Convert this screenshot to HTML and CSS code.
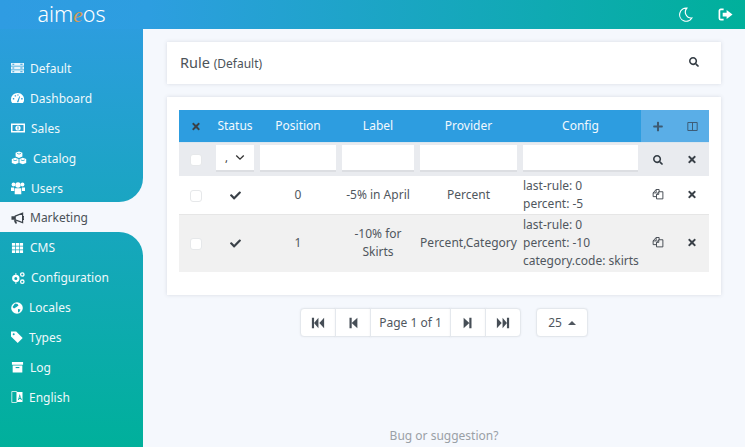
FILE: index.html
```html
<!DOCTYPE html>
<html lang="en">
<head>
<meta charset="utf-8">
<title>Rule</title>
<link rel="stylesheet" href="styles.css">
</head>
<body>
<svg class="defs" width="0" height="0" aria-hidden="true">
  <symbol id="i-check" viewBox="0 0 512 512"><path d="M173.898 439.404l-166.4-166.4c-9.997-9.997-9.997-26.206 0-36.204l36.203-36.204c9.997-9.998 26.207-9.998 36.204 0L192 312.69 432.095 72.596c9.997-9.997 26.207-9.997 36.204 0l36.203 36.204c9.997 9.997 9.997 26.206 0 36.204l-294.4 294.401c-9.998 9.997-26.207 9.997-36.204-.001z"/></symbol>
  <symbol id="i-times" viewBox="0 0 352 512"><path d="M242.72 256l100.07-100.07c12.28-12.28 12.28-32.19 0-44.48l-22.24-22.24c-12.28-12.28-32.19-12.28-44.48 0L176 189.28 75.93 89.21c-12.28-12.28-32.19-12.28-44.48 0L9.21 111.45c-12.28 12.28-12.28 32.19 0 44.48L109.28 256 9.21 356.07c-12.28 12.28-12.28 32.19 0 44.48l22.24 22.24c12.28 12.28 32.2 12.28 44.48 0L176 322.72l100.07 100.07c12.28 12.28 32.2 12.28 44.48 0l22.24-22.24c12.28-12.28 12.28-32.19 0-44.48L242.72 256z"/></symbol>
  <symbol id="i-plus" viewBox="0 0 448 512"><path d="M416 208H272V64c0-17.67-14.33-32-32-32h-32c-17.67 0-32 14.33-32 32v144H32c-17.67 0-32 14.33-32 32v32c0 17.67 14.33 32 32 32h144v144c0 17.67 14.33 32 32 32h32c17.67 0 32-14.33 32-32V304h144c17.67 0 32-14.33 32-32v-32c0-17.67-14.33-32-32-32z"/></symbol>
  <symbol id="i-search" viewBox="0 0 512 512"><path d="M505 442.7L405.3 343c-4.5-4.5-10.6-7-17-7H372c27.6-35.3 44-79.7 44-128C416 93.1 322.9 0 208 0S0 93.1 0 208s93.1 208 208 208c48.3 0 92.7-16.4 128-44v16.3c0 6.4 2.5 12.5 7 17l99.7 99.7c9.4 9.4 24.6 9.4 33.9 0l28.3-28.3c9.4-9.4 9.4-24.6.1-34zM208 336c-70.7 0-128-57.2-128-128 0-70.7 57.2-128 128-128 70.7 0 128 57.2 128 128 0 70.7-57.2 128-128 128z"/></symbol>
  <symbol id="i-columns" viewBox="0 0 16 16"><path fill="none" stroke="currentColor" stroke-width="1.400" d="M1.200 2.200h13.600v11.600H1.200zM8 2.200v11.600"/></symbol>
  <symbol id="i-copy" viewBox="0 0 16 16"><path fill="none" stroke="currentColor" stroke-width="1.200" stroke-linejoin="round" d="M5.500 11.500H1.500V6.500L5.500 2H9.500V5M5.500 2V6.500H1.500M9 5H14.500V14.500H6V8.500zM9 5V8.500H6"/></symbol>
  <symbol id="i-first" viewBox="0 0 16 16"><path d="M1 2h2.500v12H1zM8.500 2v12L3.500 8zM15 2v12L9.500 8z"/></symbol>
  <symbol id="i-prev" viewBox="0 0 12 16"><path d="M2 2h2.500v12H2zM11 2v12L4.500 8z"/></symbol>
  <symbol id="i-next" viewBox="0 0 12 16"><path d="M1 2v12l6.500-6zM7.500 2H10v12H7.500z"/></symbol>
  <symbol id="i-last" viewBox="0 0 16 16"><path d="M1 2v12l5.500-6zM7.500 2v12l5-6zM12.500 2H15v12h-2.500z"/></symbol>
</svg>

<header class="topbar">
  <div class="logo">aim<em>e</em>os</div>
  <div class="top-actions">
    <svg class="top-icon" viewBox="0 0 16 16"><path fill="none" stroke="#fff" stroke-width="1.200" d="M9.500 1.200A7 7 0 1 0 14.800 11.700 6.300 6.300 0 0 1 9.500 1.200z"/></svg>
    <svg class="top-icon" viewBox="0 0 16 16"><path fill="#fff" d="M9.200 3.300L15.500 8l-6.300 4.700V10H5V6h4.200z"/><path fill="none" stroke="#fff" stroke-width="1.800" d="M6 2.500H3A1.500 1.500 0 0 0 1.500 4v8A1.500 1.500 0 0 0 3 13.500h3"/></svg>
  </div>
</header>

<div class="layout">
  <nav class="sidebar">
    <div class="nav-group nav-top">
      <a class="nav-item"><svg class="nav-icon w1" viewBox="0 0 14 14"><path fill="#e8f5fb" d="M0 1.500h14v3H0zM0 5.500h14v3H0zM0 9.500h14v3H0z"/><path fill="#2c9cdc" d="M1.500 2.500h2v1h-2zM1.500 6.500h2v1h-2zM1.500 10.500h2v1h-2zM10 2.500h2.500v1H10zM10 6.500h2.500v1H10zM10 10.500h2.500v1H10z"/></svg>Default</a>
      <a class="nav-item"><svg class="nav-icon w1" viewBox="0 0 14 14"><path fill="#fff" d="M7 1.500a7 7 0 0 0-7 7c0 1.500.4 2.800 1.200 4h11.600A7 7 0 0 0 7 1.500z"/><path fill="#2a9ed8" d="M6.300 11.500L9 5l.8.300L8 11.500zM2 7h1.500v1.500H2zM4 4h1.500v1.500H4zM7 3h1v1.500H7zM11 7h1.500v1.500H11z"/></svg>Dashboard</a>
      <a class="nav-item"><svg class="nav-icon w2" viewBox="0 0 14 14"><path fill="#fff" d="M0 2.500h14v9H0z"/><path fill="#26a0cf" d="M1.500 4h11v6h-11z"/><circle fill="#fff" cx="7" cy="7" r="2.600"/><path fill="#26a0cf" d="M6.500 5.500h1v3h-1z"/></svg>Sales</a>
      <a class="nav-item"><svg class="nav-icon w3" viewBox="0 0 16 14"><path fill="#fff" d="M8 .5l3.400 1.300v3.800L8 7 4.600 5.600V1.800zM4.200 6.700l3.300 1.300v3.900L4.200 13.300.8 11.900V8zM11.800 6.700L15.200 8v3.900l-3.400 1.400-3.300-1.400V8z"/><path fill="#1fa5c8" d="M6 2l2 .8L10 2v.8l-2 .8-2-.8zM2.200 8.500l2 .8 2-.8v.8l-2 .8-2-.8zM9.800 8.500l2 .8 2-.8v.8l-2 .8-2-.8z"/></svg>Catalog</a>
      <a class="nav-item"><svg class="nav-icon w2" viewBox="0 0 14 14"><circle fill="#fff" cx="2.500" cy="3.500" r="1.900"/><circle fill="#fff" cx="11.500" cy="3.500" r="1.900"/><circle fill="#fff" cx="7" cy="4" r="2.700"/><path fill="#fff" d="M0 6.500h3l.3 3.500H0zM11 6.500h3V10h-3zM3.700 7.300h6.600v6H3.700z"/></svg>Users</a>
    </div>
    <a class="nav-item nav-active"><svg class="nav-icon w1" viewBox="0 0 14 14"><path fill="#3b434a" d="M.5 5H4.500V9H.5zM3 9.500h2.500l1 3.500h-2z"/><path fill="none" stroke="#3b434a" stroke-width="1.300" d="M4.500 5L12.500 1.800V12L4.500 9zM12.500 5.500H14V8.500H12.500"/></svg>Marketing</a>
    <div class="nav-group nav-bottom">
      <a class="nav-item"><svg class="nav-icon w1" viewBox="0 0 14 14"><path fill="#fff" d="M1 1.500h3.500v3H1zM5.300 1.500h3.500v3H5.300zM9.500 1.500H13v3H9.500zM1 5.500h3.500v3H1zM5.300 5.500h3.500v3H5.300zM9.500 5.500H13v3H9.500zM1 9.500h3.500v3H1zM5.300 9.500h3.500v3H5.300zM9.500 9.500H13v3H9.500z"/></svg>CMS</a>
      <a class="nav-item"><svg class="nav-icon w2" viewBox="0 0 14 14"><circle fill="none" stroke="#fff" stroke-width="2.200" cx="4.800" cy="7.500" r="2.600"/><path fill="none" stroke="#fff" stroke-width="1.600" stroke-dasharray="1.500 1.500" d="M4.800 3.400v-1M4.800 12.600v-1"/><circle fill="none" stroke="#fff" stroke-width="1.300" cx="11.300" cy="3.500" r="1.700"/><circle fill="none" stroke="#fff" stroke-width="1.300" cx="11.300" cy="10.700" r="1.700"/></svg>Configuration</a>
      <a class="nav-item"><svg class="nav-icon w4" viewBox="0 0 12 14"><circle fill="#fff" cx="6" cy="7" r="5.800"/><path fill="#0ea9b5" d="M4 2.500l2.500.5 1 1.500-2 1.500L3 7.500 1.500 6zM7 8l2.500.5L8 11.500 7 11z"/></svg>Locales</a>
      <a class="nav-item"><svg class="nav-icon w4" viewBox="0 0 12 14"><path fill="#fff" d="M0 1.500h5.200l6.500 6.500-5 5L0 6.500z"/><circle fill="#0ea9b5" cx="2.700" cy="4.200" r="1"/></svg>Types</a>
      <a class="nav-item"><svg class="nav-icon w1" viewBox="0 0 14 14"><path fill="#fff" d="M1 1.500h12v3H1zM1.800 5.500h10.400v7.500H1.800z"/><path fill="#0bacae" d="M5 7h4v1.200H5z"/></svg>Log</a>
      <a class="nav-item"><svg class="nav-icon w4" viewBox="0 0 12 14"><path fill="none" stroke="#bfeae6" stroke-width="1" d="M.8 1.500h5v11h-5z"/><path fill="#fff" d="M6 2h5.500v10H6z"/><path fill="#05aea8" d="M8.700 4L7 10h1l.3-1h1.300l.3 1h1zM8.500 8l.5-2 .4 2z"/></svg>English</a>
    </div>
  </nav>

  <main class="main">
    <section class="card title-card">
      <h1 class="title">Rule <small>(Default)</small></h1>
      <svg class="ic ic-search-top"><use href="#i-search"/></svg>
    </section>

    <section class="card table-card">
      <table class="list">
        <colgroup>
          <col class="c-check"><col class="c-status"><col class="c-pos"><col class="c-label"><col class="c-prov"><col class="c-conf"><col class="c-act"><col class="c-act">
        </colgroup>
        <thead>
          <tr class="head">
            <th><svg class="ic ic-x"><use href="#i-times"/></svg></th>
            <th>Status</th><th>Position</th><th>Label</th><th>Provider</th><th>Config</th>
            <th class="head-act"><svg class="ic ic-plus"><use href="#i-plus"/></svg></th>
            <th class="head-act"><svg class="ic ic-cols"><use href="#i-columns"/></svg></th>
          </tr>
          <tr class="filter">
            <td class="fill"><span class="box"></span></td>
            <td><div class="field select"><span class="sel-val">,</span><svg class="chev" viewBox="0 0 12 8"><path fill="none" stroke="#333" stroke-width="1.600" d="M1.500 1.500L6 6l4.500-4.500"/></svg></div></td>
            <td><div class="field"></div></td>
            <td><div class="field"></div></td>
            <td><div class="field"></div></td>
            <td><div class="field"></div></td>
            <td class="fill"><svg class="ic ic-search"><use href="#i-search"/></svg></td>
            <td class="fill"><svg class="ic ic-x"><use href="#i-times"/></svg></td>
          </tr>
        </thead>
        <tbody>
          <tr class="row">
            <td><span class="box"></span></td>
            <td><svg class="ic ic-check"><use href="#i-check"/></svg></td>
            <td>0</td><td>-5% in April</td><td>Percent</td>
            <td class="conf">last-rule: 0<br>percent: -5</td>
            <td><svg class="ic ic-copy"><use href="#i-copy"/></svg></td>
            <td><svg class="ic ic-x"><use href="#i-times"/></svg></td>
          </tr>
          <tr class="row alt">
            <td><span class="box"></span></td>
            <td><svg class="ic ic-check"><use href="#i-check"/></svg></td>
            <td>1</td><td>-10% for Skirts</td><td>Percent,Category</td>
            <td class="conf">last-rule: 0<br>percent: -10<br>category.code: skirts</td>
            <td><svg class="ic ic-copy"><use href="#i-copy"/></svg></td>
            <td><svg class="ic ic-x"><use href="#i-times"/></svg></td>
          </tr>
        </tbody>
      </table>
    </section>

    <div class="pager">
      <div class="btn-group">
        <button class="btn b-icon"><svg class="ic ic-pg"><use href="#i-first"/></svg></button>
        <button class="btn b-icon"><svg class="ic ic-pg"><use href="#i-prev"/></svg></button>
        <button class="btn b-page">Page 1 of 1</button>
        <button class="btn b-icon"><svg class="ic ic-pg"><use href="#i-next"/></svg></button>
        <button class="btn b-icon"><svg class="ic ic-pg"><use href="#i-last"/></svg></button>
      </div>
      <button class="btn b-size">25 <span class="caret"></span></button>
    </div>

    <footer class="foot">Bug or suggestion?</footer>
  </main>
</div>
</body>
</html>
```

FILE: styles.css
```css
* { box-sizing: border-box; }
html, body { margin: 0; height: 447px; overflow: hidden; }
body {
  font-family: "Noto Sans", "Open Sans", sans-serif;
  font-size: 12px;
  color: #50575e;
  background: #f5f8fd;
  display: flex;
  flex-direction: column;
}
.defs { position: absolute; }
.topbar {
  height: 29px;
  flex: none;
  display: flex;
  align-items: center;
  justify-content: space-between;
  background: linear-gradient(90deg, #2f9ce2 0%, #2d9ee0 20%, #00b09b 100%);
}
.logo {
  width: 143px;
  text-align: center;
  color: #fff;
  font-family: "Noto Sans", sans-serif;
  font-weight: 300;
  font-size: 21.500px;
  line-height: 29px;
}
.logo em { color: #d69a55; font-family: "Liberation Serif", serif; font-style: italic; }
.top-actions { display: flex; gap: 25px; padding-right: 12px; }
.top-icon { width: 15px; height: 15px; display: block; }

.layout { flex: 1; display: flex; min-height: 0; }
.sidebar { width: 143px; flex: none; display: flex; flex-direction: column; }
.nav-group { background: linear-gradient(180deg, #2f9ce2 0%, #00b09b 100%) fixed; }
.nav-top { padding-top: 23.500px; border-bottom-right-radius: 24px; }
.nav-bottom { flex: 1; border-top-right-radius: 24px; }
.nav-item {
  height: 29.900px;
  display: flex;
  align-items: center;
  padding: 2px 0 0 11px;
  color: #eef8fb;
  font-size: 12px;
}
.nav-active { color: #4a5157; }
.nav-icon { height: 14px; margin-right: 6px; flex: none; }
.w1 { width: 13px; }
.w2 { width: 14px; }
.w3 { width: 16px; }
.w4 { width: 12px; }

.main { flex: 1; min-width: 0; display: flex; flex-direction: column; padding: 13px 24px 0; }
.card { background: #fff; box-shadow: 0 0 4px rgba(60, 70, 90, .16); }
.title-card {
  height: 42px;
  display: flex;
  align-items: center;
  justify-content: space-between;
  padding: 0 22px 2px 13px;
}
.title { margin: 0; font-size: 14.500px; font-weight: 400; color: #4c5359; }
.title small { font-size: 12px; }
.table-card { height: 198px; margin-top: 13px; padding: 13px 12px; }

.ic { display: inline-block; vertical-align: middle; fill: #343c44; color: #343c44; }
.ic-search-top { width: 10px; height: 10px; }
.ic-x { width: 8px; height: 11px; fill: #3a4148; }
.ic-plus { width: 10px; height: 11px; fill: #3d5a72; }
.ic-cols { width: 11px; height: 11px; fill: #3d5a72; color: #3d5a72; }
.ic-search { width: 10px; height: 10px; }
.ic-check { width: 11px; height: 11px; fill: #3a4148; }
.ic-copy { width: 12px; height: 12px; fill: none; color: #3a4148; }
.ic-pg { width: 14px; height: 14px; fill: #464e56; }
.row .ic-check { margin-bottom: 2px; }
.row .ic-x, .row .ic-copy { margin-bottom: 4px; }

.list { width: 530px; border-collapse: collapse; table-layout: fixed; }
.c-check { width: 34px; }
.c-status { width: 44px; }
.c-pos { width: 82px; }
.c-label { width: 78px; }
.c-prov { width: 103px; }
.c-conf { width: 121px; }
.c-act { width: 34px; }
.list th, .list td { padding: 0; text-align: center; font-weight: 400; }
.head { height: 32px; background: #2d9de0; color: #f2f9fe; border-bottom: 1px solid #dbe6ee; }
.head th { font-size: 12px; padding-bottom: 1px; }
.head-act { background: #5aaee7; }
.filter { height: 33px; background: #e9ebef; }
.filter td { padding: 2px 3px 4px; }
.filter .fill { padding: 0 0 1px; }
.field { height: 27px; background: #fff; border-bottom: 2px solid #dcdee2; }
.select { display: flex; align-items: center; justify-content: center; gap: 7px; color: #333; font-size: 11px; }
.sel-val { line-height: 1; }
.chev { width: 10px; height: 7px; }
.box {
  display: inline-block;
  width: 12px;
  height: 12px;
  background: #fff;
  border: 1px solid #e6e8ea;
  border-radius: 3px;
  vertical-align: middle;
}
.row { height: 39px; background: #fff; border-bottom: 1px solid #e6e6e6; }
.row.alt { height: 57px; background: #f1f1f1; border-bottom: 0; }
.row td { line-height: 18px; padding-top: 1px; }
.row.alt td { padding-top: 0; }
.list .conf { text-align: left; padding-left: 3px; white-space: nowrap; }

.pager { display: flex; justify-content: center; gap: 15px; margin-top: 13px; }
.btn-group { display: flex; }
.btn {
  height: 29px;
  padding: 0;
  background: #fff;
  border: 1px solid #e4e8ed;
  font: inherit;
  color: #50575e;
  display: flex;
  align-items: center;
  justify-content: center;
  box-shadow: 0 0 2px rgba(60, 70, 90, .08);
}
.btn-group .btn + .btn { margin-left: -1px; }
.btn-group .btn:first-child { border-radius: 4px 0 0 4px; }
.btn-group .btn:last-child { border-radius: 0 4px 4px 0; }
.b-icon { width: 36px; }
.b-page { width: 81px; }
.b-size { width: 52px; border-radius: 4px; gap: 6px; }
.caret { width: 0; height: 0; border: 4px solid transparent; border-top: 0; border-bottom: 4px solid #50575e; }
.foot { margin-top: auto; height: 22px; text-align: center; color: #9aa0a6; font-size: 12px; line-height: 22px; }
```
